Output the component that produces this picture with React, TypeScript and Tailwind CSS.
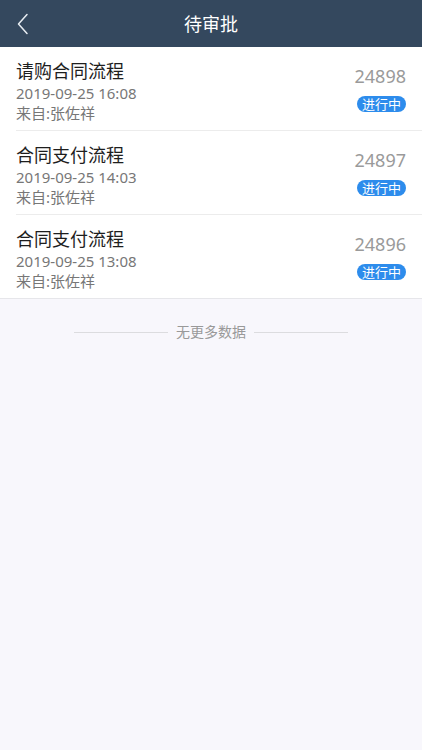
import React from "react";

const items = [
  { title: "请购合同流程", date: "2019-09-25 16:08", from: "来自:张佐祥", id: "24898" },
  { title: "合同支付流程", date: "2019-09-25 14:03", from: "来自:张佐祥", id: "24897" },
  { title: "合同支付流程", date: "2019-09-25 13:08", from: "来自:张佐祥", id: "24896" },
];

export default function App() {
  return (
    <div
      className="w-[422px] h-[750px] bg-[#f8f7fc] flex flex-col"
      style={{ fontFamily: '"Noto Sans", "Noto Sans CJK SC", sans-serif' }}
    >
      <div className="h-[47px] bg-[#34485e] flex items-center relative shrink-0">
        <div className="absolute left-[16px] top-[13px]">
          <svg width="14" height="22" viewBox="0 0 14 22" fill="none">
            <path d="M11 1.5 L2.5 11 L11 20.5" stroke="#e8edf2" strokeWidth="1.5" strokeLinecap="round" strokeLinejoin="round" />
          </svg>
        </div>
        <div className="flex-1 text-center text-white text-[18px] leading-[24px]">待审批</div>
      </div>
      <div className="bg-white border-b border-[#e6e6ea]">
        {items.map((it, i) => (
          <div key={i} className="pl-[16px]">
            <div
              className={
                i < items.length - 1
                  ? "flex justify-between pr-[16px] h-[84px] border-b border-[#ececec]"
                  : "flex justify-between pr-[16px] h-[83px]"
              }
            >
              <div className="pt-[12px] flex flex-col">
                <div className="text-[18px] leading-[24px] text-[#1e1e1e]">{it.title}</div>
                <div className="text-[15px] leading-[20px] text-[#777777]">{it.date}</div>
                <div className="text-[15px] leading-[20px] text-[#777777]">{it.from}</div>
              </div>
              <div className="pt-[17px] flex flex-col items-end">
                <div className="text-[18px] leading-[24px] text-[#9a9a9a]">{it.id}</div>
                <div className="mt-[8px] h-[16px] px-[5px] rounded-full bg-[#2d8cec] text-white text-[13px] leading-[16px] flex items-center">
                  进行中
                </div>
              </div>
            </div>
          </div>
        ))}
      </div>
      <div className="mt-[23px] w-[274px] mx-auto flex items-center gap-[8px]">
        <div className="flex-1 h-px bg-[#dcdcdf]" />
        <div className="text-[14px] leading-[20px] text-[#999999]">无更多数据</div>
        <div className="flex-1 h-px bg-[#dcdcdf]" />
      </div>
    </div>
  );
}
